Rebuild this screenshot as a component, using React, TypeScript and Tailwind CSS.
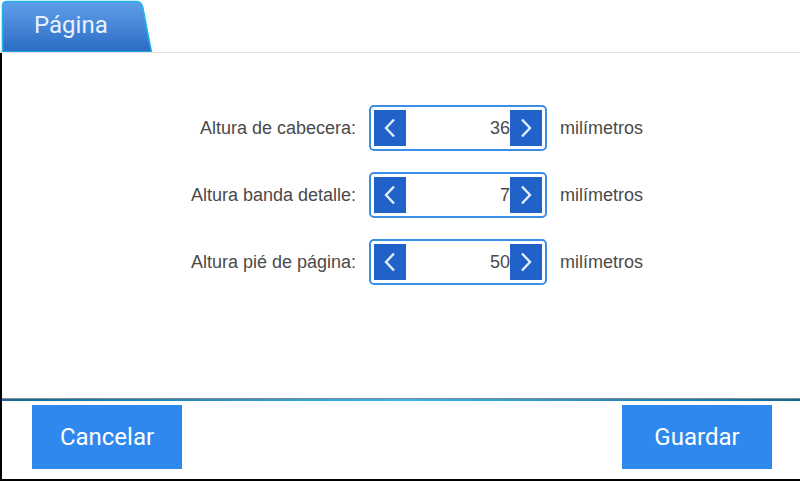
import { useState } from "react";

const Chevron = ({ dir }: { dir: "left" | "right" }) => (
  <svg width="14" height="20" viewBox="0 0 14 20" fill="none">
    <polyline
      points={dir === "left" ? "11,1.5 3,10 11,18.5" : "3,1.5 11,10 3,18.5"}
      stroke="#e6eefb"
      strokeWidth="2.4"
      strokeLinejoin="miter"
    />
  </svg>
);

const Spinner = ({ value, onChange }: { value: number; onChange: (v: number) => void }) => (
  <div className="flex items-center w-[178px] h-[46px] border-2 border-[#3b8ee8] rounded-[5px] p-[3px] bg-white">
    <button
      onClick={() => onChange(value - 1)}
      className="w-[32px] h-[36px] bg-[#2162c9] flex items-center justify-center shrink-0"
    >
      <Chevron dir="left" />
    </button>
    <div className="flex-1 text-right text-[18px] text-[#4a4a4a] font-['Liberation_Sans',sans-serif]">
      {value}
    </div>
    <button
      onClick={() => onChange(value + 1)}
      className="w-[32px] h-[36px] bg-[#2162c9] flex items-center justify-center shrink-0"
    >
      <Chevron dir="right" />
    </button>
  </div>
);

const App = () => {
  const [cabecera, setCabecera] = useState(36);
  const [detalle, setDetalle] = useState(7);
  const [pie, setPie] = useState(50);

  const rows = [
    { label: "Altura de cabecera:", value: cabecera, set: setCabecera },
    { label: "Altura banda detalle:", value: detalle, set: setDetalle },
    { label: "Altura pié de página:", value: pie, set: setPie },
  ];

  return (
    <div className="w-[800px] h-[481px] bg-white flex flex-col overflow-hidden">
      <div className="h-[53px] flex items-end border-b border-[#e2e2e2] shrink-0">
        <div className="relative w-[153px] h-[53px]">
          <svg className="absolute inset-0" width="153" height="53" viewBox="0 0 153 53">
            <defs>
              <linearGradient id="tabGrad" x1="0" y1="0" x2="0" y2="1">
                <stop offset="0" stopColor="#5e9fea" />
                <stop offset="1" stopColor="#2b6cc5" />
              </linearGradient>
            </defs>
            <path
              d="M2.5,53 L2.5,7 Q2.5,2.5 7,2.5 L136,2.5 Q141,2.5 142.5,7.5 L151.5,53 Z"
              fill="url(#tabGrad)"
              stroke="#20b3ea"
              strokeWidth="1.6"
            />
          </svg>
          <span className="absolute left-[34px] top-[10px] text-[24px] leading-[32px] text-[#eaf1fb] font-['Roboto',sans-serif]">
            Página
          </span>
        </div>
      </div>

      <div className="flex-1 flex flex-col border-l-2 border-b-2 border-black">
        <div className="flex-1 flex flex-col gap-[21px] pt-[52px]">
          {rows.map(r => (
            <div key={r.label} className="flex items-center h-[46px]">
              <div className="w-[354px] text-right text-[18px] text-[#4a4a4a] font-['Liberation_Sans',sans-serif]">
                {r.label}
              </div>
              <div className="ml-[13px]">
                <Spinner value={r.value} onChange={r.set} />
              </div>
              <div className="ml-[13px] text-[18px] text-[#4a4a4a] font-['Liberation_Sans',sans-serif]">
                milímetros
              </div>
            </div>
          ))}
        </div>

        <div className="h-px bg-[#8a8a8a]" />
        <div className="h-[2px] bg-gradient-to-r from-[#0f6898] via-[#3cb4ea] to-[#0f6898]" />

        <div className="h-[78px] flex justify-between items-start pt-[4px] pl-[30px] pr-[28px]">
          <button className="w-[150px] h-[64px] bg-[#2f88ee] text-white text-[24px] font-['Roboto',sans-serif]">
            Cancelar
          </button>
          <button className="w-[150px] h-[64px] bg-[#2f88ee] text-white text-[24px] font-['Roboto',sans-serif]">
            Guardar
          </button>
        </div>
      </div>
    </div>
  );
};

export default App;
